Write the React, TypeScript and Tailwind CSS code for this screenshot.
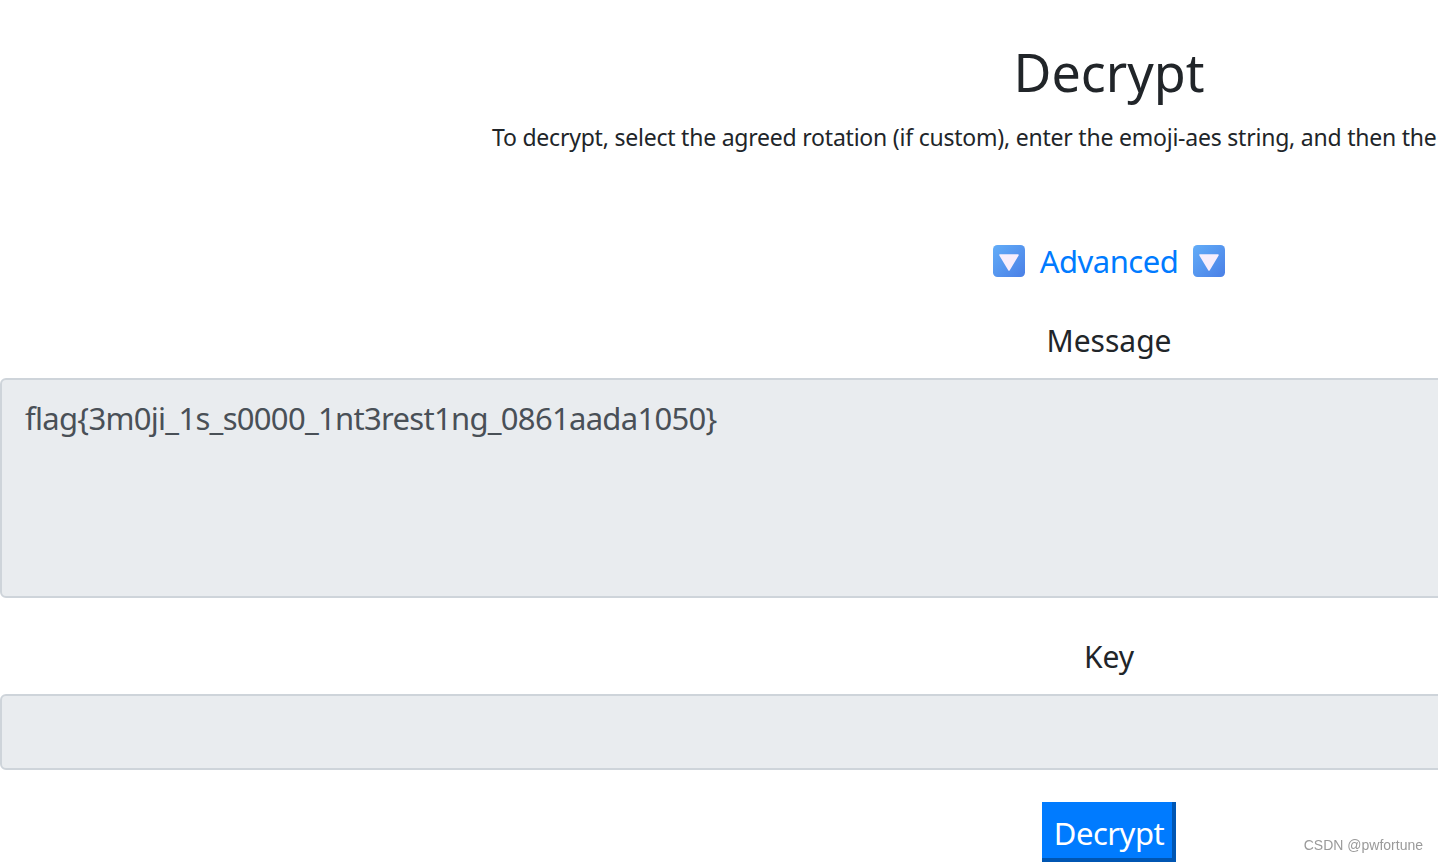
const fontStack = "font-['Noto_Sans','Open_Sans',sans-serif]";

function DownButton() {
  return (
    <svg width="34" height="34" viewBox="0 0 34 34" className="shrink-0">
      <defs>
        <linearGradient id="downFill" x1="0" y1="0" x2="1" y2="1">
          <stop offset="0" stopColor="#62adf8" />
          <stop offset="1" stopColor="#4a7fe6" />
        </linearGradient>
      </defs>
      <rect x="1" y="1" width="32" height="32" rx="4.5" fill="url(#downFill)" />
      <path d="M8 11 H26 L17 26 Z" fill="#f8eefc" stroke="#f8eefc" strokeWidth="1.5" strokeLinejoin="round" />
    </svg>
  );
}

export default function App() {
  return (
    <div className={`h-[862px] overflow-hidden bg-white text-[#212529] ${fontStack}`}>
      <div className="w-[2218px] flex flex-col items-center">
        <h1 className="mt-[37px] h-[70px] text-[52px] leading-[70px] font-normal">Decrypt</h1>
        <p className="mt-[14px] w-[1234px] h-[32px] text-[23px] leading-[32px] tracking-[-0.22px] whitespace-nowrap">
          To decrypt, select the agreed rotation (if custom), enter the emoji-aes string, and then the
        </p>

        <div className="mt-[88px] h-[40px] flex items-center gap-[14px] text-[31px] leading-[38px] tracking-[-0.5px] text-[#007bff]">
          <DownButton />
          <a href="#">Advanced</a>
          <DownButton />
        </div>

        <label className="mt-[39px] h-[42px] text-[30px] leading-[42px]">Message</label>
        <textarea
          disabled
          readOnly
          value="flag{3m0ji_1s_s0000_1nt3rest1ng_0861aada1050}"
          className="mt-[16px] w-full h-[220px] resize-none rounded-[6px] border-2 border-[#ced4da] bg-[#e9ecef] px-[23px] py-[14px] text-[31px] leading-[48px] tracking-[-0.7px] text-[#495057] outline-none"
        />

        <label className="mt-[38px] h-[42px] text-[30px] leading-[42px]">Key</label>
        <input
          disabled
          className="mt-[16px] w-full h-[76px] rounded-[6px] border-2 border-[#ced4da] bg-[#e9ecef] px-[23px] text-[31px] text-[#495057] outline-none"
        />

        <button className="mt-[32px] w-[134px] h-[60px] border-r-4 border-b-4 border-[#0056b3] bg-[#007bff] pl-[4px] pt-[6px] text-[31px] leading-[50px] tracking-[-0.5px] text-white">
          Decrypt
        </button>
      </div>

      {/* watermark */}
      <div className="fixed right-[15px] bottom-[8px] text-[14px] leading-[18px] text-[#9a9a9a] font-['Liberation_Sans',sans-serif]">
        CSDN @pwfortune
      </div>
    </div>
  );
}
